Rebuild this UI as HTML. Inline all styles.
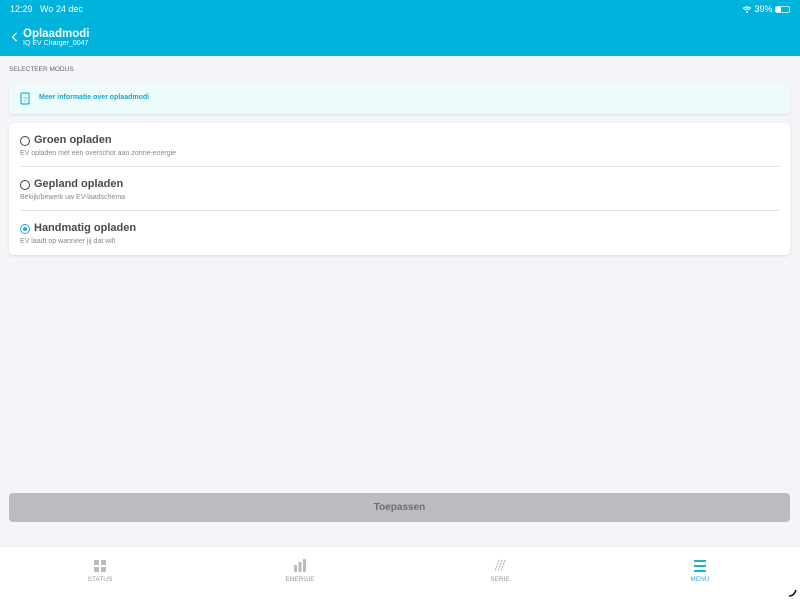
<!DOCTYPE html>
<html><head><style>
*{margin:0;padding:0;box-sizing:border-box}
body{width:800px;height:600px;background:#f4f5f8;font-family:"Liberation Sans",sans-serif;position:relative;overflow:hidden;color:#333}
.hdr{position:absolute;left:0;top:0;width:800px;height:56px;background:#00b3dd;color:#fff}
.abs{position:absolute}
.info{left:9px;top:83px;width:781px;height:31px;background:#eefbfd;border-radius:4px;box-shadow:0 1px 2px rgba(0,0,0,.08)}
.card{left:9px;top:123px;width:781px;height:132px;background:#fff;border-radius:4px;box-shadow:0 1px 3px rgba(0,0,0,.1)}
.row{position:absolute;left:0;width:781px;height:44px}
.t{position:absolute;left:25px;top:11px;font-size:11px;font-weight:bold;color:#4a4a4a}
.s{position:absolute;left:11px;top:27px;font-size:7px;color:#888}
.r{position:absolute;left:11px;top:13px;width:10px;height:10px;border:1.3px solid #444;border-radius:50%}
.sep{position:absolute;left:11px;right:11px;bottom:0;height:1px;background:#e2e2e2}
.btn{left:9px;top:493px;width:781px;height:29px;background:#babcc0;border-radius:4px;color:#6b6d71;font-size:10px;font-weight:bold;text-align:center;line-height:29px}
.tab{top:546px;left:0;width:800px;height:54px;background:#fff;border-top:1px solid #eee}
.lbl{position:absolute;top:29px;font-size:6.5px;color:#999;width:60px;text-align:center}
</style></head><body>
<div class="hdr">
<div class="abs" style="left:10px;top:4px;font-size:9px">12:29&nbsp;&nbsp; Wo 24 dec</div>
<div class="abs" style="left:742px;top:4px;font-size:9px">
<svg width="10" height="8" viewBox="0 0 10 8" style="vertical-align:-1px"><path d="M1 3.5a6 6 0 0 1 8 0M2.5 5a3.5 3.5 0 0 1 5 0" stroke="#fff" stroke-width="1.2" fill="none"/><circle cx="5" cy="7" r="1" fill="#fff"/></svg> 39%</div>
<div class="abs" style="left:775px;top:6px;width:15px;height:7px;border:1px solid rgba(255,255,255,.7);border-radius:2px"><div style="width:5px;height:5px;background:#fff;border-radius:1px"></div></div>
<svg class="abs" style="left:11px;top:32px" width="7" height="10" viewBox="0 0 7 10"><path d="M5.5 1L1.5 5l4 4" stroke="#fff" stroke-width="1.3" fill="none"/></svg>
<div class="abs" style="left:23px;top:28px;font-size:11.5px;font-weight:bold">Oplaadmodi</div>
<div class="abs" style="left:23px;top:40px;font-size:7px">IQ EV Charger_0047</div>
</div>
<div class="abs" style="left:9px;top:66px;font-size:6.5px;color:#666">SELECTEER MODUS</div>
<div class="abs info">
<svg class="abs" style="left:11px;top:9px" width="10" height="13" viewBox="0 0 10 13"><rect x="1" y="1" width="8" height="11" rx="1" stroke="#1fb0d8" fill="none" stroke-width="1.2"/><text x="5" y="10" font-size="7" fill="#1fb0d8" text-anchor="middle" font-family="Liberation Sans">?</text></svg>
<div class="abs" style="left:30px;top:11px;font-size:7px;color:#1aa6cf;font-weight:bold">Meer informatie over oplaadmodi</div>
</div>
<div class="abs card">
<div class="row" style="top:0"><div class="r"></div><div class="t">Groen opladen</div><div class="s">EV opladen met een overschot aan zonne-energie</div><div class="sep"></div></div>
<div class="row" style="top:44px"><div class="r"></div><div class="t">Gepland opladen</div><div class="s">Bekijk/bewerk uw EV-laadschema</div><div class="sep"></div></div>
<div class="row" style="top:88px"><div class="r" style="border-color:#1fb0d8"><div style="margin:1.5px;width:4.5px;height:4.5px;border-radius:50%;background:#1fb0d8"></div></div><div class="t">Handmatig opladen</div><div class="s">EV laadt op wanneer jij dat wilt</div></div>
</div>
<div class="abs btn">Toepassen</div>
<div class="abs tab">
<svg class="abs" style="left:94px;top:13px" width="12" height="12"><rect x="0" y="0" width="5" height="5" fill="#bbb"/><rect x="7" y="0" width="5" height="5" fill="#bbb"/><rect x="0" y="7" width="5" height="5" fill="#bbb"/><rect x="7" y="7" width="5" height="5" fill="#bbb"/></svg>
<div class="lbl" style="left:70px">STATUS</div>
<svg class="abs" style="left:294px;top:12px" width="12" height="13"><rect x="0" y="6" width="3" height="7" fill="#bbb"/><rect x="4.5" y="3" width="3" height="10" fill="#bbb"/><rect x="9" y="0" width="3" height="13" fill="#bbb"/></svg>
<div class="lbl" style="left:270px">ENERGIE</div>
<svg class="abs" style="left:494px;top:12px" width="12" height="13"><path d="M5 1L1 12M8 1L4 12M11 1L7 12" stroke="#bbb" stroke-width="1.3" stroke-dasharray="2 1"/></svg>
<div class="lbl" style="left:470px">SERIE</div>
<svg class="abs" style="left:694px;top:13px" width="12" height="12"><rect y="0" width="12" height="2" fill="#1fb0d8"/><rect y="5" width="12" height="2" fill="#1fb0d8"/><rect y="10" width="12" height="2" fill="#1fb0d8"/></svg>
<div class="lbl" style="left:670px;color:#1fb0d8">MENU</div>
</div>
<svg class="abs" style="left:788px;top:588px" width="10" height="10"><path d="M1 8Q6 8 8 2" stroke="#111" stroke-width="1.5" fill="none"/></svg>
</body></html>
